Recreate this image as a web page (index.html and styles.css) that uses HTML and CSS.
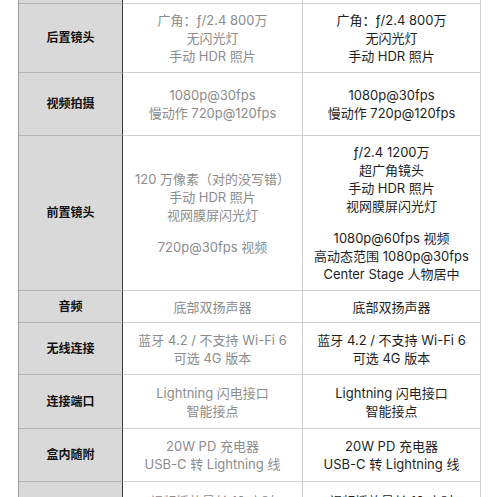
FILE: index.html
```html
<!DOCTYPE html>
<html lang="zh-CN">
<head>
<meta charset="utf-8">
<link rel="stylesheet" href="styles.css">
</head>
<body>
<div class="table">
  <div class="row r0"><div class="cell label"></div><div class="cell old"></div><div class="cell new"></div></div>
  <div class="row r1">
    <div class="cell label">后置镜头</div>
    <div class="cell old"><div class="p">广角：ƒ/2.4 800万<br>无闪光灯<br>手动 HDR 照片</div></div>
    <div class="cell new"><div class="p">广角：ƒ/2.4 800万<br>无闪光灯<br>手动 HDR 照片</div></div>
  </div>
  <div class="row r2">
    <div class="cell label">视频拍摄</div>
    <div class="cell old"><div class="p">1080p@30fps<br>慢动作 720p@120fps</div></div>
    <div class="cell new"><div class="p">1080p@30fps<br>慢动作 720p@120fps</div></div>
  </div>
  <div class="row r3">
    <div class="cell label">前置镜头</div>
    <div class="cell old"><div class="p">120 万像素（对的没写错）<br>手动 HDR 照片<br>视网膜屏闪光灯</div><div class="p gap">720p@30fps 视频</div></div>
    <div class="cell new"><div class="p">ƒ/2.4 1200万<br>超广角镜头<br>手动 HDR 照片<br>视网膜屏闪光灯</div><div class="p gap">1080p@60fps 视频<br>高动态范围 1080p@30fps<br>Center Stage 人物居中</div></div>
  </div>
  <div class="row r4">
    <div class="cell label">音频</div>
    <div class="cell old"><div class="p">底部双扬声器</div></div>
    <div class="cell new"><div class="p">底部双扬声器</div></div>
  </div>
  <div class="row r5">
    <div class="cell label">无线连接</div>
    <div class="cell old"><div class="p">蓝牙 4.2 / 不支持 Wi-Fi 6<br>可选 4G 版本</div></div>
    <div class="cell new"><div class="p">蓝牙 4.2 / 不支持 Wi-Fi 6<br>可选 4G 版本</div></div>
  </div>
  <div class="row r6">
    <div class="cell label">连接端口</div>
    <div class="cell old"><div class="p">Lightning 闪电接口<br>智能接点</div></div>
    <div class="cell new"><div class="p">Lightning 闪电接口<br>智能接点</div></div>
  </div>
  <div class="row r7">
    <div class="cell label">盒内随附</div>
    <div class="cell old"><div class="p">20W PD 充电器<br>USB-C 转 Lightning 线</div></div>
    <div class="cell new"><div class="p">20W PD 充电器<br>USB-C 转 Lightning 线</div></div>
  </div>
  <div class="row r8">
    <div class="cell label">电池续航</div>
    <div class="cell old top"><div class="p">视频播放最长 10 小时<br>音频播放最长 50 小时</div></div>
    <div class="cell new top"><div class="p">视频播放最长 10 小时<br>音频播放最长 50 小时</div></div>
  </div>
</div>
</body>
</html>
```
FILE: styles.css
```css
html, body {
  margin: 0;
  padding: 0;
  background: #ffffff;
  overflow: hidden;
}
body {
  font-family: "Inter", "Noto Sans CJK SC", sans-serif;
  font-size: 13px;
  line-height: 18px;
}
.table {
  margin-left: 18px;
  width: 463px;
  border-left: 1px solid #9a9a9a;
  box-sizing: border-box;
}
.row {
  display: grid;
  grid-template-columns: 104px 180px 178px;
}
.cell {
  box-sizing: border-box;
  border-bottom: 1px solid #cfcfcf;
  border-right: 1px solid #cfcfcf;
  display: flex;
  flex-direction: column;
  justify-content: center;
  align-items: center;
  text-align: center;
}
.label {
  background: #d9d9d9;
  border-right: 1px solid #3a3a3a;
  border-bottom-color: #b4b4b4;
  font-weight: 700;
  font-size: 12px;
  color: #111;
}
.old { color: #8c8c8c; }
.new { color: #1e1e1e; }
.gap { margin-top: 14px; }
.top { justify-content: flex-start; padding-top: 10px; }
.r0 { height: 4px; }
.r1 { height: 69px; }
.r2 { height: 63px; }
.r3 { height: 155px; }
.r4 { height: 32px; }
.r5 { height: 52px; }
.r6 { height: 54px; }
.r7 { height: 53px; }
.r8 { height: 56px; }
```
